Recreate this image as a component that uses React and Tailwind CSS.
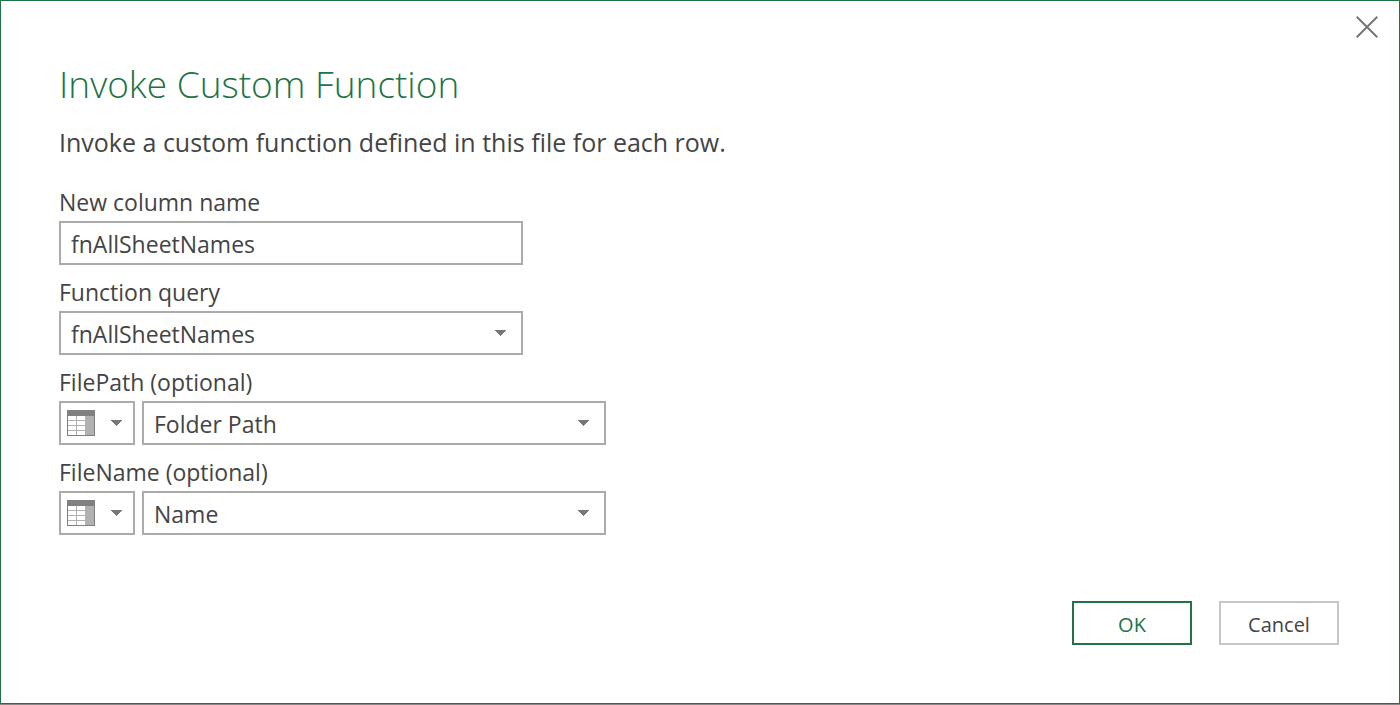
import React, { useState } from 'react';

function Caret({ className }) {
  return (
    <svg width="11" height="6" viewBox="0 0 11 6" aria-hidden="true" className={className} shapeRendering="crispEdges">
      <path d="M0 0h11v1h-1v1h-1v1h-1v1h-1v1h-1v1h-1v-1h-1v-1h-1v-1h-1v-1h-1v-1h-1z" fill="#777777" />
    </svg>
  );
}

function TableIcon() {
  return (
    <svg width="28" height="26" viewBox="0 0 28 26" aria-hidden="true" shapeRendering="crispEdges">
      <rect width="28" height="26" fill="#808080" />
      <rect x="1" y="6" width="26" height="19" fill="#b1b1b1" />
      <path d="M1 6h8v4h-8zM10 6h8v4h-8zM1 11h8v4h-8zM10 11h8v4h-8zM1 16h8v4h-8zM10 16h8v4h-8zM1 21h8v4h-8zM10 21h8v4h-8z" fill="#ffffff" />
    </svg>
  );
}

function Select({ id, options }) {
  const [value, setValue] = useState(options[0]);
  return (
    <div className="relative w-full max-w-[464px]">
      <select
        id={id}
        value={value}
        onChange={(e) => setValue(e.target.value)}
        className="block h-11 w-full appearance-none border-2 border-[#ababab] bg-white pt-0.5 pr-10 pl-2.5 text-[23px] text-[#444444]"
      >
        {options.map((o) => (
          <option key={o}>{o}</option>
        ))}
      </select>
      <Caret className="pointer-events-none absolute top-[19px] right-[17px]" />
    </div>
  );
}

function Field({ id, label, children }) {
  return (
    <div className="flex flex-col gap-1">
      <label htmlFor={id} className="self-start text-[23px] leading-[30px]">
        {label}
      </label>
      {children}
    </div>
  );
}

function ColumnField({ id, label, options }) {
  return (
    <Field id={id} label={label}>
      <div className="flex gap-[7px]">
        <button
          type="button"
          aria-haspopup="listbox"
          aria-label={label + ' value type'}
          className="flex h-11 w-19 shrink-0 items-center justify-between border-2 border-[#ababab] bg-white pr-[11px] pl-1.5"
        >
          <TableIcon />
          <Caret />
        </button>
        <Select id={id} options={options} />
      </div>
    </Field>
  );
}

export default function App() {
  const [name, setName] = useState('fnAllSheetNames');
  return (
    <div className="flex min-h-screen flex-col border-b border-[#8a8a8a] bg-white font-['Open_Sans','Noto_Sans',sans-serif] text-[#444444]">
      <main
        role="dialog"
        aria-labelledby="dialog-title"
        className="flex grow flex-col border border-[#217346] pt-[11px] pr-[60px] pb-[58px] pl-[58px]"
      >
        <button type="button" aria-label="Close" className="-mr-[43px] self-end p-1">
          <svg width="22" height="22" viewBox="0 0 22 22" aria-hidden="true">
            <path d="M.7.7l20.6 20.6M21.3.7L.7 21.3" stroke="#777777" strokeWidth="2" />
          </svg>
        </button>
        <h1 id="dialog-title" className="mt-3.5 text-[37px] leading-[56px] font-light text-[#217346]">
          Invoke Custom Function
        </h1>
        <p className="mt-3 text-[25px] leading-9">Invoke a custom function defined in this file for each row.</p>
        <form className="mt-[27px] flex grow flex-col gap-3" onSubmit={(e) => e.preventDefault()}>
          <Field id="column-name" label="New column name">
            <input
              id="column-name"
              type="text"
              value={name}
              onChange={(e) => setName(e.target.value)}
              className="h-11 w-full max-w-[464px] border-2 border-[#ababab] bg-white px-2.5 pt-0.5 text-[23px]"
            />
          </Field>
          <Field id="function-query" label="Function query">
            <Select id="function-query" options={['fnAllSheetNames']} />
          </Field>
          <ColumnField id="file-path" label="FilePath (optional)" options={['Folder Path', 'Name']} />
          <ColumnField id="file-name" label="FileName (optional)" options={['Name', 'Folder Path']} />
          <div className="mt-auto flex justify-end gap-[27px] text-xl">
            <button type="submit" className="h-11 w-30 border-2 border-[#217346] bg-white pt-1 text-[#217346]">
              OK
            </button>
            <button type="button" className="h-11 w-30 border-2 border-[#c6c6c6] bg-white pt-1">
              Cancel
            </button>
          </div>
        </form>
      </main>
    </div>
  );
}
